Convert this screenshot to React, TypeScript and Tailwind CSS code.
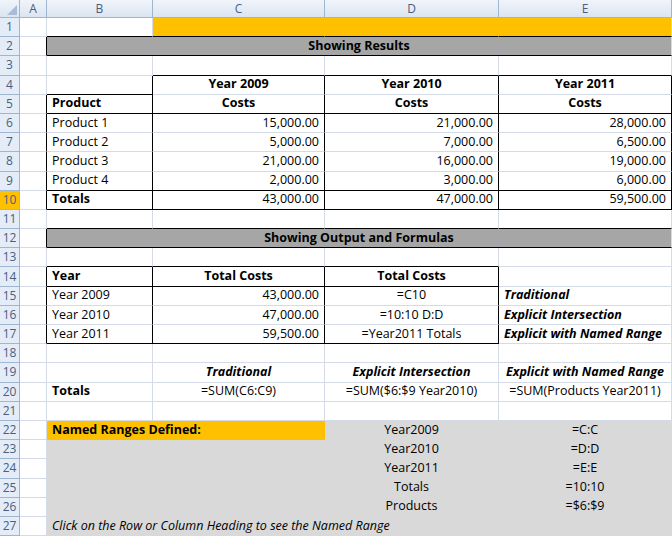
import React from "react";

type C = { t?: string; a?: "l" | "c" | "r"; b?: boolean; i?: boolean; bg?: string; rB?: boolean; bB?: boolean; noR?: boolean; noB?: boolean; span?: number };

const W = [27, 106, 172, 174, 173];
const OR = "#ffc000";
const GR = "#a6a6a6";
const LG = "#d9d9d9";

const rows: Record<number, (C | null)[]> = {};
const set = (r: number, col: number, c: C) => {
  if (!rows[r]) rows[r] = [{}, {}, {}, {}, {}];
  rows[r][col] = { ...(rows[r][col] || {}), ...c };
};
for (let r = 1; r <= 27; r++) rows[r] = [{}, {}, {}, {}, {}];

[2, 3, 4].forEach((c) => set(1, c, { bg: OR, noR: c < 4 }));
[1, 2, 3, 4].forEach((c) => set(1, c, { bB: true }));
set(2, 0, { rB: true });
set(2, 1, { t: "Showing Results", a: "c", b: true, bg: GR, bB: true, span: 4 });
[2, 3, 4].forEach((c) => set(3, c, { bB: true }));
set(4, 1, { bB: true, rB: true });
[2, 3, 4].forEach((c, i) => set(4, c, { t: ["Year 2009", "Year 2010", "Year 2011"][i], a: "c", b: true, rB: true }));
for (let r = 5; r <= 10; r++) { set(r, 0, { rB: true }); [1, 2, 3, 4].forEach((c) => set(r, c, { rB: true })); }
set(5, 1, { t: "Product", b: true });
[2, 3, 4].forEach((c) => set(5, c, { t: "Costs", a: "c", b: true }));
[5, 9, 10].forEach((r) => [1, 2, 3, 4].forEach((c) => set(r, c, { bB: true })));
const data = [
  ["Product 1", "15,000.00", "21,000.00", "28,000.00"],
  ["Product 2", "5,000.00", "7,000.00", "6,500.00"],
  ["Product 3", "21,000.00", "16,000.00", "19,000.00"],
  ["Product 4", "2,000.00", "3,000.00", "6,000.00"],
  ["Totals", "43,000.00", "47,000.00", "59,500.00"],
];
data.forEach((d, i) => {
  const r = 6 + i;
  set(r, 1, { t: d[0], b: r === 10 });
  [2, 3, 4].forEach((c) => set(r, c, { t: d[c - 1], a: "r" }));
});
[1, 2, 3, 4].forEach((c) => set(11, c, { bB: true }));
set(12, 0, { rB: true });
set(12, 1, { t: "Showing Output and Formulas", a: "c", b: true, bg: GR, bB: true, span: 4 });
[1, 2, 3].forEach((c) => set(13, c, { bB: true }));
for (let r = 14; r <= 17; r++) { set(r, 0, { rB: true }); [1, 2, 3].forEach((c) => set(r, c, { rB: true })); }
[14, 17].forEach((r) => [1, 2, 3].forEach((c) => set(r, c, { bB: true })));
set(14, 1, { t: "Year", b: true });
set(14, 2, { t: "Total Costs", b: true, a: "c" });
set(14, 3, { t: "Total Costs", b: true, a: "c" });
const t2 = [
  ["Year 2009", "43,000.00", "=C10", "Traditional"],
  ["Year 2010", "47,000.00", "=10:10 D:D", "Explicit Intersection"],
  ["Year 2011", "59,500.00", "=Year2011 Totals", "Explicit with Named Range"],
];
t2.forEach((d, i) => {
  const r = 15 + i;
  set(r, 1, { t: d[0] });
  set(r, 2, { t: d[1], a: "r" });
  set(r, 3, { t: d[2], a: "c" });
  set(r, 4, { t: d[3], b: true, i: true });
});
set(19, 2, { t: "Traditional", b: true, i: true, a: "c" });
set(19, 3, { t: "Explicit Intersection", b: true, i: true, a: "c" });
set(19, 4, { t: "Explicit with Named Range", b: true, i: true, a: "c" });
set(20, 1, { t: "Totals", b: true });
set(20, 2, { t: "=SUM(C6:C9)", a: "c" });
set(20, 3, { t: "=SUM($6:$9 Year2010)", a: "c" });
set(20, 4, { t: "=SUM(Products Year2011)", a: "c" });
set(22, 1, { t: "Named Ranges Defined:", b: true, bg: OR, span: 2 });
const nr = [["Year2009", "=C:C"], ["Year2010", "=D:D"], ["Year2011", "=E:E"], ["Totals", "=10:10"], ["Products", "=$6:$9"]];
for (let r = 22; r <= 27; r++) {
  if (r > 22) { set(r, 1, { bg: LG, noR: true, noB: true }); set(r, 2, { bg: LG, noR: true, noB: true }); }
  set(r, 3, { bg: LG, noR: true, noB: true, a: "c", t: nr[r - 22]?.[0] });
  set(r, 4, { bg: LG, noR: true, noB: true, a: "c", t: nr[r - 22]?.[1] });
}
set(22, 1, { noB: true, noR: true });
set(27, 1, { t: "Click on the Row or Column Heading to see the Named Range", i: true, span: 4 });

const LINE = "#d4dbe6";

function Cell({ c, w }: { c: C; w: number }) {
  const bg = c.bg || "#ffffff";
  const rc = c.rB ? "#000" : c.noR || c.span ? bg : LINE;
  const bc = c.bB ? "#000" : c.noB ? bg : LINE;
  return (
    <div
      className="shrink-0 h-full flex items-center px-[5px] overflow-visible whitespace-nowrap box-border"
      style={{
        width: w,
        background: bg,
        borderRight: `1px solid ${rc}`,
        borderBottom: `1px solid ${bc}`,
        justifyContent: c.a === "c" ? "center" : c.a === "r" ? "flex-end" : "flex-start",
        fontWeight: c.b ? 700 : 400,
        fontStyle: c.i ? "italic" : "normal",
      }}
    >
      {c.t}
    </div>
  );
}

export default function App() {
  return (
    <div className="w-[672px] h-[536px] overflow-hidden bg-white text-[12.5px] text-black" style={{ fontFamily: '"Open Sans", "Noto Sans", sans-serif' }}>
      <div className="flex h-[18px] bg-gradient-to-b from-[#f1f5fb] to-[#dbe4f1] text-[#4a5f7e] text-[12px] border-b border-[#9eb6ce]">
        <div className="w-[20px] shrink-0 border-r border-[#9eb6ce] flex items-end justify-end">
          <div className="w-0 h-0 border-l-[10px] border-l-transparent border-b-[10px] border-b-[#a9bcd6] mr-[2px] mb-[2px]" />
        </div>
        {["A", "B", "C", "D", "E"].map((l, i) => (
          <div key={l} className="shrink-0 flex items-center justify-center border-r border-[#9eb6ce]" style={{ width: W[i] }}>{l}</div>
        ))}
      </div>
      {Array.from({ length: 27 }, (_, k) => k + 1).map((r) => {
        const cells = rows[r];
        const out: React.ReactNode[] = [];
        for (let ci = 0; ci < 5; ) {
          const c = cells[ci] || {};
          const span = c.span || 1;
          let w = 0;
          for (let j = 0; j < span; j++) w += W[ci + j];
          out.push(<Cell key={ci} c={span > 1 ? { ...c, span: undefined } : c} w={w} />);
          ci += span;
        }
        return (
          <div key={r} className="flex h-[19.2px]">
            <div className={`w-[20px] shrink-0 flex items-center justify-center text-[12px] text-[#4a5f7e] border-r border-b border-[#9eb6ce] ${r === 10 ? "bg-[#ffc000]" : "bg-[#e4ecf7]"}`}>{r}</div>
            {out}
          </div>
        );
      })}
    </div>
  );
}
